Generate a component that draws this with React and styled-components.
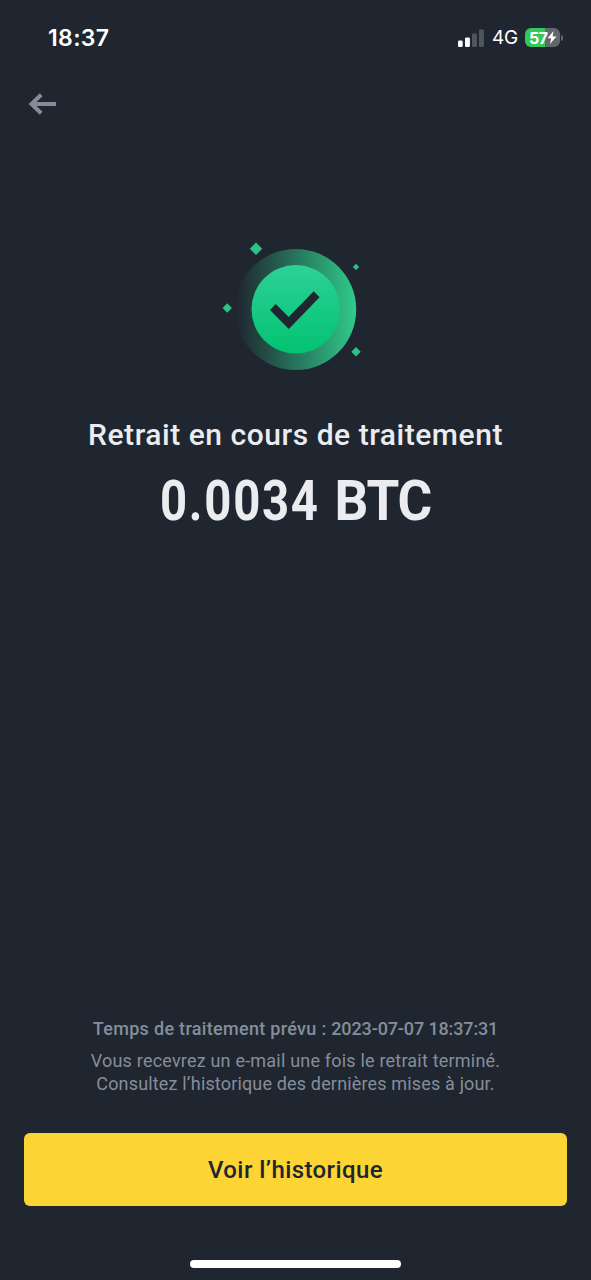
import React from "react";
import styled, { createGlobalStyle } from "styled-components";

const GlobalStyle = createGlobalStyle`
  * { box-sizing: border-box; }
  body { margin: 0; background: #1f262f; }
`;

const Screen = styled.div`
  width: 591px;
  height: 1280px;
  display: flex;
  flex-direction: column;
  background: #1f262f;
  color: #eaecef;
  font-family: Roboto, "Noto Sans", sans-serif;
  overflow: hidden;
`;

const StatusBar = styled.header`
  height: 76px;
  flex: none;
  display: flex;
  align-items: center;
  justify-content: space-between;
  padding: 0 28px 0 48px;
  font-family: Inter, "Liberation Sans", sans-serif;
  color: #fff;
`;

const Clock = styled.span`
  margin-bottom: 1px;
  font-size: 23px;
  font-weight: 600;
  letter-spacing: 0.35px;
`;

const Indicators = styled.div`
  display: flex;
  align-items: center;
  margin-bottom: 1px;
`;

const Network = styled.span`
  margin: 1px 7px 0 8px;
  font-size: 19px;
  line-height: 22px;
  letter-spacing: -0.2px;
`;

const Battery = styled.div`
  width: 35px;
  height: 19px;
  display: flex;
  align-items: center;
  padding-left: 4px;
  border-radius: 6px;
  background: linear-gradient(90deg, #34c759 57%, #62666d 57%);
  font-size: 16px;
  font-weight: 700;
  letter-spacing: -0.6px;
`;

const BatteryCap = styled.div`
  width: 2px;
  height: 6px;
  margin-left: 1px;
  border-radius: 0 2px 2px 0;
  background: #62666d;
`;

const NavBar = styled.nav`
  height: 56px;
  flex: none;
  display: flex;
  align-items: center;
  padding-left: 28px;
`;

const BackButton = styled.button`
  display: flex;
  padding: 0;
  border: 0;
  background: none;
  color: #858b9b;
`;

const Result = styled.main`
  flex: 1;
  display: flex;
  flex-direction: column;
  align-items: center;
  padding-top: 106px;
`;

const Title = styled.h1`
  margin: 42px 0 0;
  font-size: 30px;
  line-height: 40px;
  font-weight: 500;
  letter-spacing: 0.54px;
  white-space: nowrap;
`;

const Amount = styled.p`
  display: flex;
  justify-content: center;
  gap: 12px;
  margin: 14px 0 0;
  font-size: 55px;
  line-height: 64px;
  font-weight: 700;
  white-space: nowrap;
`;

const AmountValue = styled.span`
  letter-spacing: 2px;
  transform: scaleX(0.86);
  transform-origin: right;
`;

const AmountUnit = styled.span`
  margin-right: 26px;
  letter-spacing: -1.2px;
  transform: scaleX(0.965);
  transform-origin: right;
`;

const Footer = styled.footer`
  flex: none;
  display: flex;
  flex-direction: column;
  align-items: center;
  padding: 0 24px 12px;
  color: #848e9c;
`;

const Estimate = styled.p`
  margin: 0 0 8px;
  font-size: 18px;
  line-height: 24px;
  font-weight: 500;
  letter-spacing: 0.31px;
  white-space: nowrap;
`;

const Timestamp = styled.time`
  letter-spacing: -0.13px;
`;

const Note = styled.p`
  margin: 0;
  font-size: 18px;
  line-height: 23px;
  white-space: nowrap;
  letter-spacing: ${(p) => p.$tracking};
`;

const HistoryButton = styled.button`
  width: 100%;
  height: 73px;
  margin: 38px 0 54px;
  padding: 0;
  border: 0;
  border-radius: 6px;
  background: #fcd535;
  color: #202630;
  font-family: inherit;
  font-size: 24px;
  font-weight: 500;
  letter-spacing: 0.4px;
`;

const HomeIndicator = styled.div`
  width: 211px;
  height: 8px;
  border-radius: 4px;
  background: #fff;
`;

const SignalIcon = () => (
  <svg width="26" height="18" viewBox="0 0 26 18">
    <rect x="0" y="11.5" width="4.7" height="6.5" rx="1.3" fill="#fff" />
    <rect x="7" y="8.5" width="4.9" height="9.5" rx="1.3" fill="#fff" />
    <rect x="14" y="4.5" width="4.9" height="13.5" rx="1.3" fill="#50565e" />
    <rect x="21" y="0.5" width="4.9" height="17.5" rx="1.3" fill="#50565e" />
  </svg>
);

const BoltIcon = () => (
  <svg width="10" height="13" viewBox="0 0 10 13">
    <path d="M6.5 0 0.5 7.3h3.7L2.9 13 9.5 5.4H5.6z" fill="#fff" />
  </svg>
);

const ArrowIcon = () => (
  <svg width="29" height="24" viewBox="0 0 29 24" fill="none" stroke="currentColor" strokeWidth="4">
    <path d="M28 12H4M13.2 2.8 3.5 12l9.7 9.2" />
  </svg>
);

const SuccessIcon = () => (
  <svg width="157" height="135" viewBox="217 238 157 135">
    <defs>
      <linearGradient id="halo" x1="236" y1="0" x2="356" y2="0" gradientUnits="userSpaceOnUse">
        <stop offset="0" stopColor="#2ebd85" stopOpacity="0" />
        <stop offset="1" stopColor="#2fcb8b" />
      </linearGradient>
      <linearGradient id="disc" x1="0" y1="265" x2="0" y2="354" gradientUnits="userSpaceOnUse">
        <stop offset="0" stopColor="#2dd197" />
        <stop offset="1" stopColor="#02c271" />
      </linearGradient>
    </defs>
    <circle cx="295.7" cy="309.5" r="60.5" fill="url(#halo)" />
    <circle cx="295.7" cy="309.3" r="44.2" fill="url(#disc)" />
    <path d="M270 310l5.7-6 13 12.9 25-25.6 5.8 6L288.8 329z" fill="#1f262f" />
    <g fill="#2bc287">
      <path d="M256 242.5l6.2 6.2-6.2 6.2-6.2-6.2z" />
      <path d="M356 263.7l3.2 3.2-3.2 3.2-3.2-3.2z" />
      <path d="M227.2 303.3l4.7 4.7-4.7 4.7-4.7-4.7z" />
      <path d="M356 347l4.7 4.8-4.7 4.7-4.7-4.7z" />
    </g>
  </svg>
);

export default function App() {
  return (
    <Screen>
      <GlobalStyle />
      <StatusBar>
        <Clock>18:37</Clock>
        <Indicators>
          <SignalIcon />
          <Network>4G</Network>
          <Battery>
            57
            <BoltIcon />
          </Battery>
          <BatteryCap />
        </Indicators>
      </StatusBar>
      <NavBar>
        <BackButton aria-label="Retour">
          <ArrowIcon />
        </BackButton>
      </NavBar>
      <Result>
        <SuccessIcon />
        <Title>Retrait en cours de traitement</Title>
        <Amount>
          <AmountValue>0.0034</AmountValue>
          <AmountUnit>BTC</AmountUnit>
        </Amount>
      </Result>
      <Footer>
        <Estimate>
          Temps de traitement prévu : <Timestamp>2023-07-07 18:37:31</Timestamp>
        </Estimate>
        <Note $tracking="0.2px">Vous recevrez un e-mail une fois le retrait terminé.</Note>
        <Note $tracking="0.16px">Consultez l’historique des dernières mises à jour.</Note>
        <HistoryButton>Voir l’historique</HistoryButton>
        <HomeIndicator />
      </Footer>
    </Screen>
  );
}
